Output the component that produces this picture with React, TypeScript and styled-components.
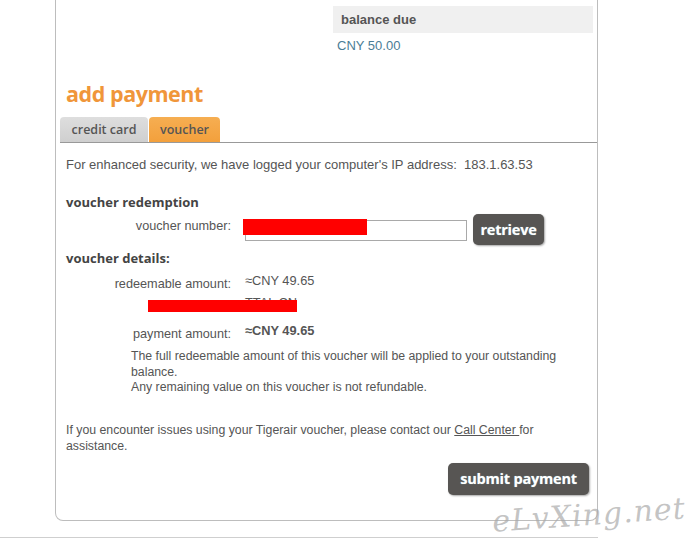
import React from "react";
import styled, { createGlobalStyle } from "styled-components";

const Global = createGlobalStyle`
  html, body { margin: 0; padding: 0; background: #fff; }
  body { font-family: "Liberation Sans", Arial, sans-serif; color: #555; }
`;

const Page = styled.div`
  position: relative;
  width: 697px;
  height: 550px;
  overflow: hidden;
`;

const PanelWrap = styled.div`
  padding-left: 55px;
`;

const Panel = styled.div`
  width: 541px;
  border: 1px solid #bdbdbd;
  border-top: none;
  border-radius: 0 0 8px 8px;
  padding-bottom: 25px;
`;

const BalanceArea = styled.div`
  display: flex;
  flex-direction: column;
  align-items: flex-end;
  padding: 6px 4px 0 0;
`;

const BalanceBlock = styled.div`
  width: 260px;
`;

const BalanceBox = styled.div`
  height: 27px;
  background: #f0f0f0;
  display: flex;
  align-items: center;
  padding-left: 8px;
  font-weight: 700;
  font-size: 13px;
  color: #555;
`;

const BalanceValue = styled.div`
  margin-top: 5px;
  padding-left: 4px;
  font-size: 13px;
  line-height: 16px;
  color: #4a7d96;
`;

const Heading = styled.h2`
  margin: 25px 0 0 10px;
  font-family: "Open Sans", sans-serif;
  font-weight: 700;
  font-size: 21.5px;
  line-height: 30px;
  color: #f0963a;
  letter-spacing: -0.45px;
`;

const Tabs = styled.div`
  display: flex;
  gap: 1px;
  margin: 8px 0 0 4px;
  border-bottom: 1px solid #999;
`;

const Tab = styled.div<{ $active?: boolean }>`
  height: 25px;
  display: flex;
  align-items: center;
  justify-content: center;
  padding: 0 8px;
  border-radius: 4px 4px 0 0;
  font-family: "Open Sans", sans-serif;
  font-weight: 600;
  font-size: 12.5px;
  color: #555;
  background: ${(p) =>
    p.$active
      ? "linear-gradient(#f6ae52, #f3a03c)"
      : "linear-gradient(#dedede, #cfcfcf)"};
  width: ${(p) => (p.$active ? "71px" : "88px")};
  box-sizing: border-box;
`;

const Content = styled.div`
  padding: 0 0 0 10px;
`;

const Text = styled.p<{ $top: number; $indent?: number; $lh?: number; $size?: number }>`
  margin: ${(p) => p.$top}px 0 0 ${(p) => p.$indent ?? 0}px;
  font-size: ${(p) => p.$size ?? 12.3}px;
  line-height: ${(p) => p.$lh ?? 16}px;
  color: #555;
`;

const SubHeading = styled.h3<{ $top: number }>`
  margin: ${(p) => p.$top}px 0 0 0;
  font-family: "Open Sans", sans-serif;
  font-weight: 700;
  font-size: 13px;
  line-height: 18px;
  color: #444;
`;

const FieldRow = styled.div`
  display: flex;
  align-items: flex-start;
  margin-top: 4px;
`;

const Label = styled.div<{ $hidden?: boolean }>`
  width: 165px;
  text-align: right;
  font-size: 12.7px;
  line-height: 16px;
  color: #555;
  margin-top: 3px;
  flex-shrink: 0;
  visibility: ${(p) => (p.$hidden ? "hidden" : "visible")};
`;

const InputWrap = styled.div`
  position: relative;
  margin: 5px 0 0 14px;
`;

const Input = styled.div`
  width: 222px;
  height: 21px;
  border: 1px solid #a9a9a9;
  box-sizing: border-box;
  background: #fff;
`;

const Redact = styled.div<{ $l: number; $t: number; $w: number; $h: number }>`
  position: absolute;
  left: ${(p) => p.$l}px;
  top: ${(p) => p.$t}px;
  width: ${(p) => p.$w}px;
  height: ${(p) => p.$h}px;
  background: #f00;
`;

const Button = styled.button<{ $w: number; $h: number; $size: number }>`
  width: ${(p) => p.$w}px;
  height: ${(p) => p.$h}px;
  border: none;
  border-radius: 5px;
  background: #575553;
  box-shadow: 1px 1px 2px rgba(0, 0, 0, 0.35);
  color: #fff;
  font-family: "Open Sans", sans-serif;
  font-weight: 700;
  font-size: ${(p) => p.$size}px;
  text-shadow: 0 0 1px rgba(170, 230, 240, 0.7);
  padding: 0;
  cursor: pointer;
  letter-spacing: -0.2px;
`;

const RetrieveButton = styled(Button)`
  margin-left: 6px;
  margin-top: -1px;
`;

const Details = styled.div`
  position: relative;
  margin-top: 6px;
`;

const DetailRow = styled.div`
  display: flex;
  align-items: flex-start;
  height: 25px;
`;

const Value = styled.div<{ $bold?: boolean; $shift?: number }>`
  margin-left: 14px;
  margin-top: ${(p) => p.$shift ?? 0}px;
  font-size: 12.8px;
  line-height: 16px;
  font-weight: ${(p) => (p.$bold ? 700 : 400)};
  color: #555;
`;

const Link = styled.a`
  color: #555;
  text-decoration: underline;
`;

const SubmitRow = styled.div`
  display: flex;
  justify-content: flex-end;
  margin: 9px 8px 0 0;
`;

const FooterLine = styled.div`
  width: 598px;
  height: 1px;
  background: #cfcfcf;
  margin-top: 16px;
`;

const Watermark = styled.div`
  position: absolute;
  left: 492px;
  top: 497px;
  font-family: "DejaVu Serif", serif;
  font-style: italic;
  font-size: 30px;
  color: rgba(170, 170, 170, 0.7);
  letter-spacing: 1px;
  transform: rotate(-4deg);
  pointer-events: none;
`;

export default function App() {
  return (
    <Page>
      <Global />
      <PanelWrap>
        <Panel>
          <BalanceArea>
            <BalanceBlock>
              <BalanceBox>balance due</BalanceBox>
              <BalanceValue>CNY 50.00</BalanceValue>
            </BalanceBlock>
          </BalanceArea>
          <Heading>add payment</Heading>
          <Tabs>
            <Tab>credit card</Tab>
            <Tab $active>voucher</Tab>
          </Tabs>
          <Content>
            <Text $top={14} $size={13}>
              For enhanced security, we have logged your computer's IP address:&nbsp;&nbsp;183.1.63.53
            </Text>
            <SubHeading $top={20}>voucher redemption</SubHeading>
            <FieldRow>
              <Label>voucher number:</Label>
              <InputWrap>
                <Input />
                <Redact $l={-2} $t={-1} $w={124} $h={16} />
              </InputWrap>
              <RetrieveButton $w={71} $h={31} $size={14.5}>
                retrieve
              </RetrieveButton>
            </FieldRow>
            <SubHeading $top={4}>voucher details:</SubHeading>
            <Details>
              <DetailRow>
                <Label>redeemable amount:</Label>
                <Value>≈CNY 49.65</Value>
              </DetailRow>
              <DetailRow>
                <Label $hidden>total due:</Label>
                <Value $shift={-3}>TTAL CN</Value>
              </DetailRow>
              <DetailRow>
                <Label>payment amount:</Label>
                <Value $bold>≈CNY 49.65</Value>
              </DetailRow>
              <Redact $l={82} $t={27} $w={149} $h={12} />
            </Details>
            <Text $top={1} $indent={65} $lh={15.5}>
              The full redeemable amount of this voucher will be applied to your outstanding
              <br />
              balance.
              <br />
              Any remaining value on this voucher is not refundable.
            </Text>
            <Text $top={26}>
              If you encounter issues using your Tigerair voucher, please contact our{" "}
              <Link href="#">Call Center </Link>for
              <br />
              assistance.
            </Text>
          </Content>
          <SubmitRow>
            <Button $w={141} $h={32} $size={14.5}>
              submit payment
            </Button>
          </SubmitRow>
        </Panel>
      </PanelWrap>
      <FooterLine />
      <Watermark>eLvXing.net</Watermark>
    </Page>
  );
}
